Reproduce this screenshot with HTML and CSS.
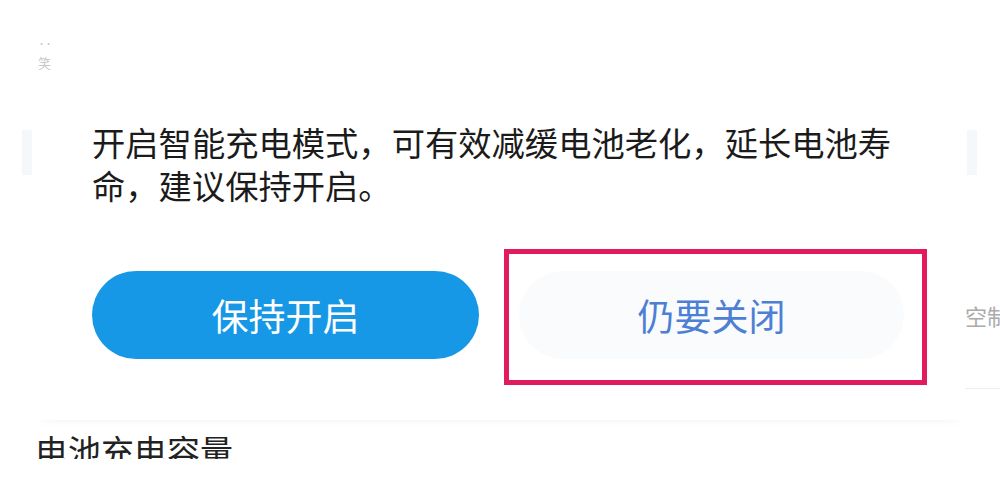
FILE: index.html
```html
<!DOCTYPE html>
<html lang="zh-CN">
<head>
<meta charset="utf-8">
<title>智能充电</title>
<link rel="stylesheet" href="styles.css">
</head>
<body>
<div class="page">
  <div class="top">
    <span class="faint-mark">‥</span>
    <span class="faint-mark small">笑</span>
  </div>
  <div class="middle">
    <div class="side left"><div class="ghost-block"></div></div>
    <div class="card">
      <p class="message">开启智能充电模式，可有效减缓电池老化，延长电池寿命，建议保持开启。</p>
      <div class="actions">
        <button class="btn primary">保持开启</button>
        <div class="highlight">
          <button class="btn secondary">仍要关闭</button>
        </div>
      </div>
    </div>
    <div class="side right">
      <div class="ghost-block"></div>
      <span class="side-text">空制</span>
      <div class="side-line"></div>
    </div>
  </div>
  <div class="bottom">
    <div class="bottom-clip"><span class="bottom-text">电池充电容量</span></div>
  </div>
</div>
</body>
</html>
```

FILE: styles.css
```css
* { box-sizing: border-box; }
html, body {
  margin: 0;
  padding: 0;
  background: #ffffff;
  font-family: "Noto Sans CJK SC", "Noto Sans", sans-serif;
}
.page {
  width: 1000px;
  height: 477px;
  overflow: hidden;
}
.top {
  height: 100px;
  padding: 36px 0 0 38px;
  display: flex;
  flex-direction: column;
  gap: 6px;
}
.faint-mark {
  color: #b8b8b8;
  font-size: 14px;
  line-height: 14px;
}
.faint-mark.small {
  color: #c8c8c8;
  font-size: 13px;
}
.middle {
  display: grid;
  grid-template-columns: 35px 930px 35px;
  height: 320px;
}
.side {
  position: relative;
  padding-top: 30px;
  overflow: hidden;
}
.ghost-block {
  width: 10px;
  height: 45px;
  background: #f5f8fa;
}
.side.left .ghost-block { margin-left: 22px; }
.side.right .ghost-block { margin-left: 2px; }
.side-text {
  display: block;
  margin-top: 127px;
  color: #ababab;
  font-size: 22px;
  line-height: 26px;
  white-space: nowrap;
}
.side-line {
  margin-top: 60px;
  height: 1px;
  background: #eeeeee;
}
.card {
  background: #ffffff;
  box-shadow: 0 6px 10px -6px rgba(0,0,0,0.05);
  padding: 20px 0 0 57px;
}
.message {
  margin: 0;
  width: 815px;
  font-size: 33.3px;
  line-height: 43px;
  color: #1b1b1b;
}
.actions {
  display: flex;
  align-items: flex-start;
  margin-top: 43px;
}
.btn {
  border: 0;
  font-family: inherit;
  font-size: 37px;
  width: 387px;
  height: 88px;
  border-radius: 44px;
  padding: 0;
  cursor: pointer;
}
.primary {
  margin-top: 22px;
  background: #1798e6;
  color: #ffffff;
}
.highlight {
  margin-left: 25px;
  width: 423px;
  height: 136px;
  border: 5px solid #e21c5c;
  padding: 17px 0 0 10px;
}
.secondary {
  width: 385px;
  background: #fafbfc;
  color: #4d80d4;
}
.bottom {
  padding: 10px 0 0 35px;
}
.bottom-clip {
  height: 29px;
  overflow: hidden;
}
.bottom-text {
  display: block;
  font-size: 33px;
  line-height: 40px;
  color: #222222;
}
```
